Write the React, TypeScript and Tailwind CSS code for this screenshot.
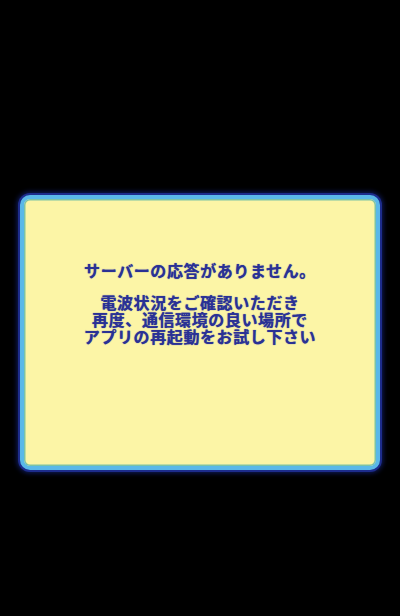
export default function App() {
  return (
    <div className="h-[616px] w-[400px] bg-black pt-[195px]">
      <div className="mx-[20px] h-[275px] rounded-[10px] border-4 border-[#5ab8e8] bg-[#fcf5a6] shadow-[0_0_0_2px_#1d2c8c,0_0_5px_3px_#101c60,inset_0_0_0_1.5px_#7cc3a6]">
        <div className="flex flex-col items-center pt-[63px] font-['Noto_Sans_CJK_JP',sans-serif] text-[16px] font-bold leading-[17px] tracking-[0.6px] text-[#2a3194] [text-shadow:0_0_1px_#3a42a8]">
          <p>サーバーの応答がありません。</p>
          <div className="mt-[15px] flex flex-col items-center">
            <p>電波状況をご確認いただき</p>
            <p>再度、通信環境の良い場所で</p>
            <p>アプリの再起動をお試し下さい</p>
          </div>
        </div>
      </div>
    </div>
  );
}
